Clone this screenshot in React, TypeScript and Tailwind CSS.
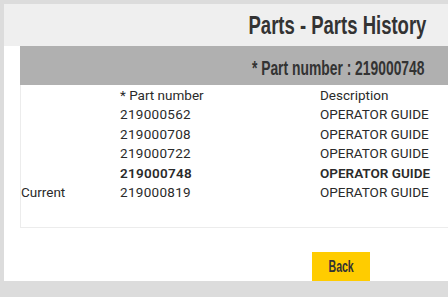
const rows = [
  { label: "", part: "219000562", desc: "OPERATOR GUIDE", bold: false },
  { label: "", part: "219000708", desc: "OPERATOR GUIDE", bold: false },
  { label: "", part: "219000722", desc: "OPERATOR GUIDE", bold: false },
  { label: "", part: "219000748", desc: "OPERATOR GUIDE", bold: true },
  { label: "Current", part: "219000819", desc: "OPERATOR GUIDE", bold: false },
];

// no condensed face installed, so squeeze Liberation Sans bold
const condensed = "font-['Liberation_Sans',Arial,sans-serif] font-bold inline-block";

export default function App() {
  return (
    <div className="w-[448px] h-[297px] overflow-hidden bg-[#dcdcdc] pt-1 pl-1">
      <div className="w-[444px] h-[277px] bg-white flex flex-col">
        <div className="h-[42px] bg-[#efefef] flex items-center justify-end pr-[22px]">
          <h1 className={`${condensed} text-[25px] leading-none text-[#333] scale-x-[0.74] origin-right`}>
            Parts - Parts History
          </h1>
        </div>
        <div className="ml-4 flex flex-col">
          <div className="h-[39px] bg-[#b0b0b0] flex items-center justify-end pr-6 pt-[3px]">
            <span className={`${condensed} text-[21px] leading-none text-[#333] scale-x-[0.66] origin-right`}>
              * Part number : 219000748
            </span>
          </div>
          <div className="border-l border-b border-[#ececec] pb-[25px] font-['Roboto',sans-serif] text-[13.5px] text-[#2a2a2a]">
            <div className="flex h-[19.5px] items-center">
              <span className="w-[99px]" />
              <span className="w-[200px]">* Part number</span>
              <span>Description</span>
            </div>
            {rows.map((r) => (
              <div
                key={r.part}
                className={`flex h-[19.5px] items-center ${r.bold ? "font-semibold" : ""}`}
              >
                <span className="w-[99px] font-normal">{r.label}</span>
                <span className="w-[200px] tracking-[0.3px]">{r.part}</span>
                <span>{r.desc}</span>
              </div>
            ))}
          </div>
        </div>
        <div className="flex-1 flex items-end pl-[308px]">
          <button className="w-[58px] h-[29px] bg-[#ffcc00] flex items-center justify-center pt-px">
            <span className={`${condensed} text-[16px] leading-none text-[#333] scale-x-[0.66]`}>
              Back
            </span>
          </button>
        </div>
      </div>
    </div>
  );
}
